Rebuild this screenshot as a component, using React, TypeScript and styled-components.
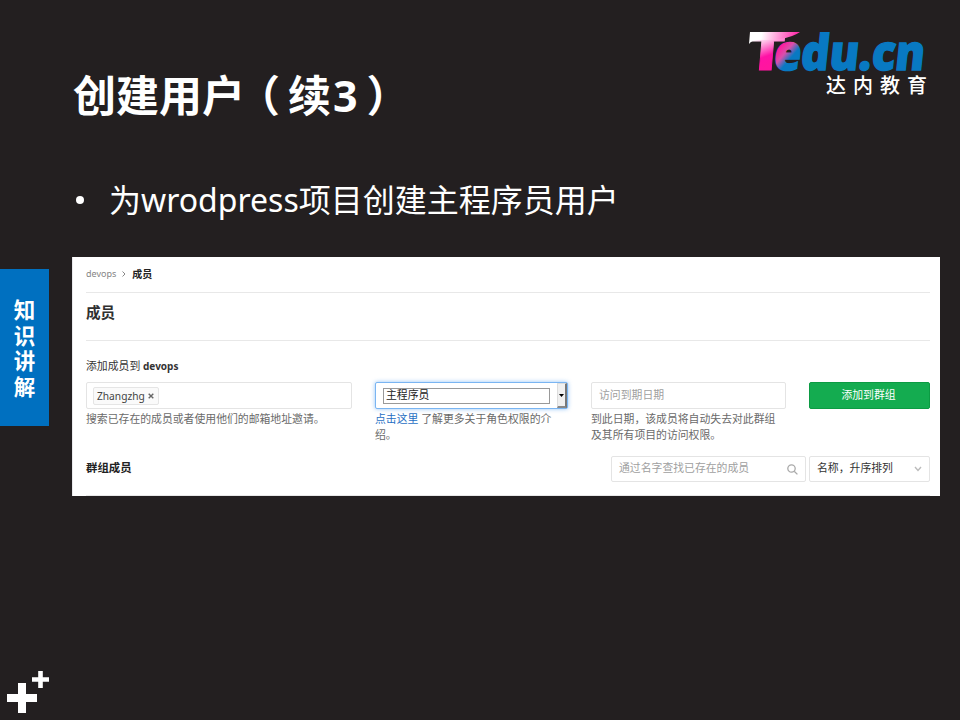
import React from "react";
import styled, { createGlobalStyle } from "styled-components";

const GlobalStyle = createGlobalStyle`
  * { box-sizing: border-box; }
  body { margin: 0; background: #231f20; }
`;

const Slide = styled.main`
  width: 960px;
  height: 720px;
  overflow: hidden;
  display: flex;
  flex-direction: column;
  background: #231f20;
  color: #fff;
  font-family: "Noto Sans", "Noto Sans CJK SC", sans-serif;
`;

const Header = styled.header`
  height: 172px;
  padding: 28px 32px 0 73px;
  display: flex;
  justify-content: space-between;
`;

const Title = styled.h1`
  margin: 36px 0 0;
  font-size: 43px;
  line-height: 64px;
  font-weight: 700;
  white-space: nowrap;
`;

const Paren = styled.span<{ $shift: number }>`
  display: inline-block;
  transform: translateX(${(p) => p.$shift}px);
`;

const Digit = styled.span`
  margin-left: 2px;
`;

const Brand = styled.div`
  width: 182px;
  display: flex;
  flex-direction: column;
  align-items: flex-end;
`;

const BrandName = styled.span`
  margin: -4px -6px 0 0;
  font-size: 20px;
  line-height: 26px;
  letter-spacing: 7px;
  font-weight: 500;
  font-family: "Noto Sans CJK SC", sans-serif;
`;

const Bullet = styled.p`
  margin: 0;
  height: 85px;
  padding-left: 76px;
  display: flex;
  gap: 24px;
  font-size: 32px;
  line-height: 55px;
  white-space: nowrap;
`;

const Dot = styled.span`
  width: 8px;
  height: 8px;
  margin: 24px 1px 0 0;
  border-radius: 50%;
  background: #fff;
`;

const Body = styled.div`
  display: flex;
  align-items: flex-start;
  gap: 23px;
`;

const SideTab = styled.aside`
  width: 49px;
  height: 157px;
  margin-top: 12px;
  padding-top: 28px;
  display: flex;
  flex-direction: column;
  align-items: center;
  background: #0070c0;
  font-size: 21.5px;
  line-height: 25.5px;
  font-weight: 700;
`;

const Panel = styled.section`
  width: 868px;
  height: 239px;
  padding: 0 10px 0 13px;
  border-left: 1px solid #e9e9ec;
  background: #fff;
  color: #5c5c5c;
  font-size: 10.85px;
  line-height: 16px;
  display: flex;
  flex-direction: column;
`;

const Crumbs = styled.nav`
  height: 36px;
  flex: none;
  border-bottom: 1px solid #e8e8e8;
  display: flex;
  align-items: center;
  gap: 5px;
  padding-bottom: 2px;
  font-size: 9px;
  color: #858585;
  b { color: #222; font-size: 10px; }
`;

const Heading = styled.h2`
  margin: 0;
  height: 48px;
  flex: none;
  border-bottom: 1px solid #e8e8e8;
  padding-top: 7px;
  font-size: 14.6px;
  line-height: 24px;
  color: #303030;
`;

const Label = styled.div`
  height: 41px;
  flex: none;
  padding-top: 17px;
  color: #333;
  b { font-size: 10px; }
`;

const FormRow = styled.div`
  height: 73px;
  flex: none;
  display: grid;
  grid-template-columns: 266px 193px 195px 121px;
  column-gap: 23px;
`;

const Help = styled.div`
  margin-top: 2px;
  line-height: 15.5px;
  white-space: nowrap;
  color: #6a6a6a;
`;

const Link = styled.a`
  color: #1f6fc4;
`;

const Field = styled.div<{ $tone?: string }>`
  height: 27px;
  border: 1px solid #e4e4e4;
  border-radius: 2px;
  padding: 0 7px;
  display: flex;
  align-items: center;
  color: ${(p) => p.$tone ?? "#a0a0a0"};
  background: #fff;
  white-space: nowrap;
`;

const FieldText = styled.span`
  margin-top: -2px;
`;

const Token = styled.span`
  height: 18px;
  width: 66px;
  margin-left: -1px;
  padding: 0 4px 0 3px;
  border: 1px solid #e5e5e5;
  border-radius: 2px;
  background: #fafafa;
  display: flex;
  align-items: center;
  justify-content: space-between;
  color: #444;
  font-size: 10.2px;
`;

const RoleSelect = styled(Field)`
  border-color: #7ab5f2;
  box-shadow: 0 0 4px rgba(90, 165, 245, 0.65);
  padding: 0 0 0 7px;
  justify-content: space-between;
  color: #222;
`;

const RoleValue = styled.span`
  width: 167px;
  height: 16px;
  border: 1px solid #999;
  padding-left: 2px;
  line-height: 12px;
`;

const SelectButton = styled.span`
  width: 10px;
  height: 25px;
  border: 1px solid #ddd;
  border-right: 2px solid #777;
  border-bottom: 2px solid #888;
  background: #f0f0f0;
  display: flex;
  align-items: center;
  justify-content: center;
`;

const AddButton = styled.button`
  height: 27px;
  border: 1px solid #0c9b43;
  border-radius: 2px;
  padding: 0 2px 2px 0;
  background: #14ac50;
  color: #fff;
  font: inherit;
`;

const ListRow = styled.div`
  flex: 1;
  padding-top: 1px;
  display: flex;
  align-items: flex-start;
  gap: 3px;
`;

const ListTitle = styled.b`
  flex: 1;
  margin-top: 4px;
  font-size: 11.4px;
  color: #222;
`;

const SearchField = styled(Field)`
  width: 195px;
  height: 26px;
  justify-content: space-between;
`;

const SortField = styled(Field)`
  width: 121px;
  height: 26px;
  justify-content: space-between;
`;

const BottomRule = styled.div`
  height: 1px;
  background: #e8e8e8;
`;

const Corner = styled.footer`
  margin-top: auto;
  height: 50px;
  padding-left: 7px;
`;

function Logo() {
  return (
    <svg width="182" height="48" viewBox="0 0 182 48" overflow="visible" fontFamily="Noto Sans, sans-serif" fontWeight="900">
      <defs>
        <linearGradient id="tee" gradientUnits="userSpaceOnUse" x1="14" y1="6" x2="26" y2="38">
          <stop offset="0.1" stopColor="#fff" />
          <stop offset="0.7" stopColor="#ff12a6" />
          <stop offset="1" stopColor="#ff159f" />
        </linearGradient>
        <linearGradient id="bar" gradientUnits="userSpaceOnUse" x1="16" y1="4" x2="50" y2="10">
          <stop offset="0" stopColor="#fff" />
          <stop offset="1" stopColor="#ff30ac" />
        </linearGradient>
        <linearGradient id="word" gradientUnits="userSpaceOnUse" x1="34" y1="22" x2="50" y2="34">
          <stop offset="0" stopColor="#ff1c9c" />
          <stop offset="0.4" stopColor="#d850ac" />
          <stop offset="0.8" stopColor="#0879c2" />
        </linearGradient>
      </defs>
      <g transform="skewX(-5)">
        <text x="5" y="42" fontSize="52" fill="url(#tee)" stroke="url(#tee)" strokeWidth="0.8" textLength="36" lengthAdjust="spacingAndGlyphs">T</text>
      </g>
      <path d="M4 4H54Q47 9 33 11.5L11 12Q6 12 3 16Z" fill="url(#bar)" />
      <g transform="skewX(-6)">
        <text x="31" y="41.5" fontSize="49" fill="url(#word)" stroke="url(#word)" strokeWidth="1.4" textLength="151" lengthAdjust="spacingAndGlyphs">edu.cn</text>
      </g>
    </svg>
  );
}

export default function App() {
  return (
    <>
      <GlobalStyle />
      <Slide>
        <Header>
          <Title>
            创建用户<Paren $shift={-8}>（</Paren>续<Digit>3</Digit>
            <Paren $shift={9}>）</Paren>
          </Title>
          <Brand>
            <Logo />
            <BrandName>达内教育</BrandName>
          </Brand>
        </Header>
        <Bullet>
          <Dot />
          <span>为wrodpress项目创建主程序员用户</span>
        </Bullet>
        <Body>
          <SideTab>
            <span>知</span>
            <span>识</span>
            <span>讲</span>
            <span>解</span>
          </SideTab>
          <Panel>
            <Crumbs>
              <span>devops</span>
              <svg width="6" height="8" viewBox="0 0 6 8" fill="none" stroke="#888">
                <path d="M1.5 1.5 4 4 1.5 6.5" />
              </svg>
              <b>成员</b>
            </Crumbs>
            <Heading>成员</Heading>
            <Label>
              添加成员到 <b>devops</b>
            </Label>
            <FormRow>
              <div>
                <Field>
                  <Token>
                    Zhangzhg
                    <svg width="6" height="6" viewBox="0 0 6 6" stroke="#666" strokeWidth="1.4">
                      <path d="M.7.7 5.3 5.3M5.3.7.7 5.3" />
                    </svg>
                  </Token>
                </Field>
                <Help>搜索已存在的成员或者使用他们的邮箱地址邀请。</Help>
              </div>
              <div>
                <RoleSelect>
                  <RoleValue>主程序员</RoleValue>
                  <SelectButton>
                    <svg width="5" height="3" viewBox="0 0 5 3">
                      <path d="M0 0H5L2.5 3Z" fill="#000" />
                    </svg>
                  </SelectButton>
                </RoleSelect>
                <Help>
                  <Link>点击这里</Link> 了解更多关于角色权限的介
                  <br />
                  绍。
                </Help>
              </div>
              <div>
                <Field>
                  <FieldText>访问到期日期</FieldText>
                </Field>
                <Help>
                  到此日期，该成员将自动失去对此群组
                  <br />
                  及其所有项目的访问权限。
                </Help>
              </div>
              <AddButton>添加到群组</AddButton>
            </FormRow>
            <ListRow>
              <ListTitle>群组成员</ListTitle>
              <SearchField>
                <FieldText>通过名字查找已存在的成员</FieldText>
                <svg width="11" height="11" viewBox="0 0 11 11" fill="none" stroke="#aaa" strokeWidth="1.3">
                  <circle cx="4.5" cy="4.5" r="3.7" />
                  <path d="M7.2 7.2 10.4 10.4" />
                </svg>
              </SearchField>
              <SortField $tone="#333">
                <FieldText>名称，升序排列</FieldText>
                <svg width="8" height="6" viewBox="0 0 8 6" fill="none" stroke="#bbb" strokeWidth="1.4">
                  <path d="M1 1 4 4.4 7 1" />
                </svg>
              </SortField>
            </ListRow>
            <BottomRule />
          </Panel>
        </Body>
        <Corner>
          <svg width="44" height="44" viewBox="0 0 44 44" fill="none" stroke="#fff">
            <path d="M15 13V43M0 28H30" strokeWidth="8" />
            <path d="M33.5 1V18M25 9.5H42" strokeWidth="4.6" />
          </svg>
        </Corner>
      </Slide>
    </>
  );
}
